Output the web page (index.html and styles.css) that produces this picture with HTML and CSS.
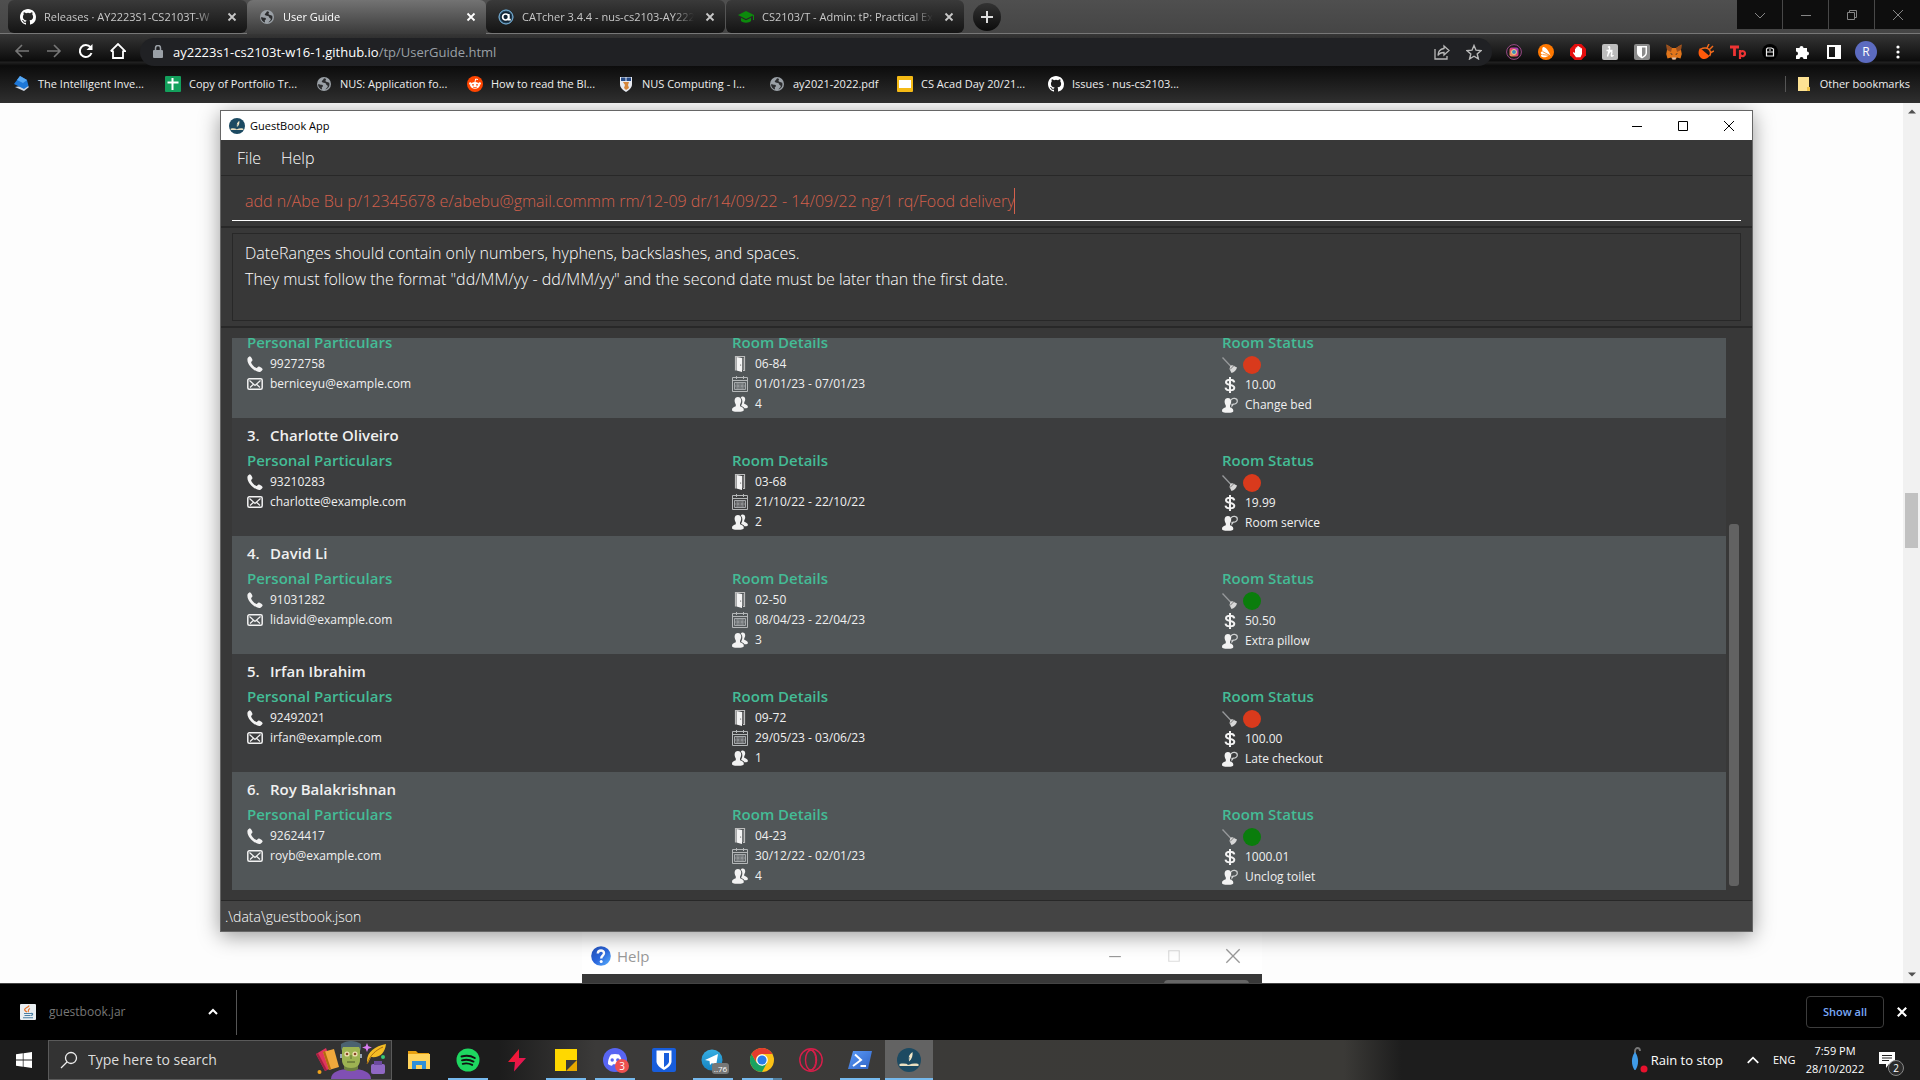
FILE: index.html
```html
<!DOCTYPE html>
<html lang="en">
<head>
<meta charset="utf-8">
<title>User Guide</title>
<link rel="stylesheet" href="styles.css">
</head>
<body>
<svg class="sprite" aria-hidden="true">
  <defs>
    <linearGradient id="insta" x1="0" y1="1" x2="1" y2="0"><stop offset="0" stop-color="#f5b04a"/><stop offset=".5" stop-color="#e0407a"/><stop offset="1" stop-color="#8a3ac8"/></linearGradient>
    <linearGradient id="bolt-fill" x1="0" y1="0" x2="1" y2="1"><stop offset="0" stop-color="#ff1a1a"/><stop offset="1" stop-color="#d8146c"/></linearGradient>
    <linearGradient id="ps-fill" x1="0" y1="0" x2="1" y2="1"><stop offset="0" stop-color="#5b9bf8"/><stop offset="1" stop-color="#2f62c4"/></linearGradient>
    <linearGradient id="tg-fill" x1="0" y1="0" x2="0" y2="1"><stop offset="0" stop-color="#37aee2"/><stop offset="1" stop-color="#1583c2"/></linearGradient>
    <linearGradient id="help-fill" x1="0" y1="0" x2="1" y2="1"><stop offset="0" stop-color="#2350b8"/><stop offset=".5" stop-color="#2a66dc"/><stop offset="1" stop-color="#5cb4ff"/></linearGradient>
  </defs>
  <symbol id="github" viewBox="0 0 16 16"><path fill="#fff" d="M8 0C3.58 0 0 3.58 0 8c0 3.54 2.29 6.53 5.47 7.59.4.07.55-.17.55-.38 0-.19-.01-.82-.01-1.49-2.01.37-2.53-.49-2.69-.94-.09-.23-.48-.94-.82-1.13-.28-.15-.68-.52-.01-.53.63-.01 1.08.58 1.23.82.72 1.21 1.87.87 2.33.66.07-.52.28-.87.51-1.07-1.78-.2-3.64-.89-3.64-3.95 0-.87.31-1.59.82-2.15-.08-.2-.36-1.02.08-2.12 0 0 .67-.21 2.2.82a7.6 7.6 0 0 1 4 0c1.53-1.04 2.2-.82 2.2-.82.44 1.1.16 1.92.08 2.12.51.56.82 1.27.82 2.15 0 3.07-1.87 3.75-3.65 3.95.29.25.54.73.54 1.48 0 1.07-.01 1.93-.01 2.2 0 .21.15.46.55.38A8.01 8.01 0 0 0 16 8c0-4.42-3.58-8-8-8z"/></symbol>
  <symbol id="globe" viewBox="0 0 16 16"><circle cx="8" cy="8" r="7" fill="#9aa0a6"/><path fill="#2b2c2e" d="M9 2.2c-2 .2-1.200 1.200-2.400 2s-1.200 1.800.2 2.200 3 .2 3.200 1.600 1.800 1 1.800 2.200-1.400 1.800-2.400 3.200c3.600-.8 4.600-4.200 3.800-6.600-1-.2-1.800-1-2.800-1s-1.200-1.600-.2-2.200zM2 8.200c1.600 0 2.400.4 3.800.6s1.600 1.800.4 2.200.2 1.600-.2 2.600C3.600 12.600 2 10.800 2 8.200z"/></symbol>
  <symbol id="catcher" viewBox="0 0 16 16"><circle cx="8" cy="8" r="7.500" fill="#2d4f66"/><circle cx="8" cy="8" r="7" fill="none" stroke="#7fb6dd" stroke-width="1"/><circle cx="8" cy="8" r="5.600" fill="#123"/><circle cx="7.600" cy="8" r="3" fill="none" stroke="#fff" stroke-width="1.700"/><path d="M10.800 5v5.600h2" stroke="#fff" stroke-width="1.600" fill="none"/></symbol>
  <symbol id="cap" viewBox="0 0 16 16"><path fill="#0c8a0c" d="M8 2 0 6l8 4 7-3.500V11h1V6zM3 8.800V12c2 2.200 8 2.200 10 0V8.800l-5 2.500z"/></symbol>
  <symbol id="close" viewBox="0 0 10 10"><path d="M1.500 1.500l7 7m0-7l-7 7" stroke="currentColor" stroke-width="1.800" fill="none"/></symbol>
  <symbol id="thin-close" viewBox="0 0 12 12"><path d="M1 1l10 10m0-10L1 11" stroke="currentColor" fill="none"/></symbol>
  <symbol id="minimise" viewBox="0 0 12 12"><path d="M1 6.500h10" stroke="currentColor" fill="none"/></symbol>
  <symbol id="maximise" viewBox="0 0 12 12"><path d="M1.500 1.500h9v9h-9z" stroke="currentColor" fill="none"/></symbol>
  <symbol id="restore" viewBox="0 0 12 12"><path d="M1.500 3.500h7v7h-7zM3.500 3.500v-2h7v7h-2" stroke="currentColor" fill="none"/></symbol>
  <symbol id="chevron-down" viewBox="0 0 12 12"><path d="M1 4l5 5 5-5" stroke="currentColor" fill="none"/></symbol>
  <symbol id="chevron-up" viewBox="0 0 12 12"><path d="M1.500 8.500L6 4l4.500 4.500" stroke="currentColor" stroke-width="1.500" fill="none"/></symbol>
  <symbol id="phone" viewBox="0 0 16 16"><path fill="#f2f2f2" d="M.5 2.600C1.200 1.200 2.400.2 3.200.4c.8.200 2.400 3 2.300 3.900-.1.900-1.600 1.500-1.400 2.300.5 2 3.200 4.800 5.200 5.300.9.200 1.500-1.300 2.400-1.400.9 0 3.700 1.700 3.900 2.500.2.900-1.300 2.600-2.600 2.900C8 16.600-.6 8.500.500 2.600z"/></symbol>
  <symbol id="mail" viewBox="0 0 16 16"><rect x=".8" y="2.800" width="14.400" height="10.400" rx="1.500" fill="none" stroke="#f2f2f2" stroke-width="1.500"/><path d="M2.500 4.500L8 9.500l5.500-5M3 11.500l3.500-3.300M13 11.500L9.500 8.200" fill="none" stroke="#f2f2f2" stroke-width="1.200"/></symbol>
  <symbol id="door" viewBox="0 0 16 16"><path d="M3.500 14.500v-14h9v14h-1.500" fill="none" stroke="#bcbcbc" stroke-width="1.200"/><path fill="#f4f4f4" d="M4.500 1L10 2v14l-5.500-1.500z"/><path d="M11 2v12" stroke="#999"/><circle cx="8.600" cy="9" r=".6" fill="#555"/></symbol>
  <symbol id="calendar" viewBox="0 0 16 16"><path d="M.5 1.500h15v14H.5zM.5 4.500h15M4.500 0v3M11.500 0v3" fill="none" stroke="#b4b7b8"/><path d="M2.500 6.500h11v7h-11zM2.500 10h11M6 6.500v7M10 6.500v7" fill="none" stroke="#a5a8aa"/><path d="M3.500 8h2M7 8h2M10.500 8h2M3.500 12h2M7 12h2M10.500 12h2" stroke="#999c9e"/></symbol>
  <symbol id="users" viewBox="0 0 16 16"><path fill="#f2f2f2" d="M8.800 1.600C9.600-.2 13 0 13.200 3c.1 1.500-.6 2.600-1 3.400v1.300c1.600.7 3.700 1.300 3.700 3 0 1-.7 1.500-3.500 1.600-.7-1.600-2.300-2-3.300-2.600.9-1.500 1.700-4 .9-6.100-.3-.8-.8-1.500-1.200-2z"/><path fill="#f2f2f2" d="M2.600 4.600C2.600 1.900 4.200 1 5.900 1s3.300 1 3.300 3.600c0 1.800-.7 3-1.200 3.900v1.700c1.700.7 3.800 1.300 3.800 3.500 0 1.500-1.300 2-5.900 2S0 15.200 0 13.700c0-2.200 2.100-2.800 3.800-3.500V8.500c-.5-.9-1.200-2.100-1.200-3.900z"/></symbol>
  <symbol id="broom" viewBox="0 0 16 16"><path d="M.5.5L9 9.500" stroke="#97999b" stroke-width="1.300"/><path fill="#d8d8d8" d="M8.500 8.500l2-.2 4.500 2.200c-.5 2.500-3 5-5.500 5.500L7.500 12z"/><path d="M8 12.500l4-4" stroke="#777"/></symbol>
  <symbol id="dollar" viewBox="0 0 16 16"><path d="M12.300 5.300C12 3.400 10.500 2.800 8 2.800S4 3.600 4 5.300 5.600 7.500 8 7.900s4.300 1 4.300 2.800S10.500 13.300 8 13.300 3.800 12.600 3.500 10.600M8 0v16" fill="none" stroke="#f2f2f2" stroke-width="2"/></symbol>
  <symbol id="request" viewBox="0 0 16 16"><path fill="#f2f2f2" d="M2.600 4.600C2.600 1.900 4.200 1 5.900 1s3.300 1 3.300 3.600c0 1.800-.7 3-1.200 3.900v1.700c1.700.7 3.300 1.300 3.300 3.500 0 1.500-1 2-5.400 2S0 15.200 0 13.700c0-2.200 2.100-2.800 3.800-3.500V8.500c-.5-.9-1.200-2.100-1.200-3.900z"/><path d="M9 3.200C10.400.4 15.400 1 15.300 4.200c0 2-2.400 3.200-4 2.900L10 8.900V6.700" fill="none" stroke="#cfd1d2" stroke-width="1.200"/></symbol>
  <symbol id="guestbook" viewBox="0 0 24 24"><circle cx="12" cy="12" r="12" fill="#1c4a62"/><path fill="#f3e8c8" d="M15.500 4c-3 2-4.500 5-4 9l.8.300c2.700-2.300 3.700-5.800 3.200-9.300z"/><path d="M2.500 18h19v-2c-3.500-.8-6.500-.6-9.500.8-3-1.400-6-1.600-9.500-.8z" fill="#eadfc0"/><path d="M12 9l-1 8" stroke="#1c4a62"/></symbol>
</svg>

<header class="browser">
  <div class="tabstrip">
    <nav class="tabs" aria-label="Tabs">
      <div class="tab"><svg class="i16"><use href="#github"/></svg><span class="tab-title">Releases · AY2223S1-CS2103T-W</span><button class="tab-x" aria-label="Close tab"><svg class="i10"><use href="#close"/></svg></button></div>
      <div class="tab active"><svg class="i16"><use href="#globe"/></svg><span class="tab-title">User Guide</span><button class="tab-x" aria-label="Close tab"><svg class="i10"><use href="#close"/></svg></button></div>
      <div class="tab"><svg class="i16"><use href="#catcher"/></svg><span class="tab-title">CATcher 3.4.4 - nus-cs2103-AY222</span><button class="tab-x" aria-label="Close tab"><svg class="i10"><use href="#close"/></svg></button></div>
      <div class="tab divided"><svg class="i16"><use href="#cap"/></svg><span class="tab-title">CS2103/T - Admin: tP: Practical Ex</span><button class="tab-x" aria-label="Close tab"><svg class="i10"><use href="#close"/></svg></button></div>
    </nav>
    <button class="new-tab" aria-label="New tab"><svg width="12" height="12"><path d="M6 0v12M0 6h12" stroke="#ddd" stroke-width="2"/></svg></button>
    <div class="frame-buttons">
      <button aria-label="Search tabs"><svg class="i12"><use href="#chevron-down"/></svg></button>
      <button aria-label="Minimise"><svg class="i12"><use href="#minimise"/></svg></button>
      <button aria-label="Restore"><svg class="i12"><use href="#restore"/></svg></button>
      <button aria-label="Close"><svg class="i12"><use href="#thin-close"/></svg></button>
    </div>
  </div>

  <div class="toolbar">
    <div class="nav-buttons">
      <button class="dim" aria-label="Back"><svg class="i16" viewBox="0 0 16 16"><path d="M15 8H2M8 2L2 8l6 6" fill="none" stroke="currentColor" stroke-width="1.600"/></svg></button>
      <button class="dim" aria-label="Forward"><svg class="i16" viewBox="0 0 16 16"><path d="M1 8h13M8 2l6 6-6 6" fill="none" stroke="currentColor" stroke-width="1.600"/></svg></button>
      <button aria-label="Reload"><svg class="i16" viewBox="0 0 16 16"><path d="M13.500 10A6 6 0 1 1 12.500 4.200" fill="none" stroke="currentColor" stroke-width="2"/><path d="M14.500 1v6h-6z" fill="currentColor"/></svg></button>
      <button aria-label="Home"><svg class="i16" viewBox="0 0 16 16"><path d="M3 7.500V15h10V7.500M.8 8.200L8 1l7.200 7.200H13M.8 8.200H3" fill="none" stroke="currentColor" stroke-width="1.800"/></svg></button>
    </div>
    <div class="omnibox">
      <svg width="10" height="14" viewBox="0 0 10 14"><path d="M1 5h8a1 1 0 0 1 1 1v6a1 1 0 0 1-1 1H1a1 1 0 0 1-1-1V6a1 1 0 0 1 1-1z" fill="#9aa0a6"/><path d="M2.500 5.500V3a2.500 2.500 0 0 1 5 0v2.500" fill="none" stroke="#9aa0a6" stroke-width="1.500"/></svg>
      <a class="url" href="#">ay2223s1-cs2103t-w16-1.github.io<span>/tp/UserGuide.html</span></a>
      <div class="omni-actions">
        <button aria-label="Share"><svg class="i16" viewBox="0 0 16 16"><path d="M1 5v10h12v-3" fill="none" stroke="currentColor" stroke-width="1.300"/><path d="M10 2l5 4.500-5 4.500V8.500C7 8.500 5 9.500 4 11.500c0-4 2.500-6.500 6-7z" fill="none" stroke="currentColor" stroke-width="1.300"/></svg></button>
        <button aria-label="Bookmark this page"><svg class="i16" viewBox="0 0 16 16"><path d="M8 1.500l2 4.700 5 .4-3.800 3.300 1.200 5L8 12.200l-4.400 2.700 1.200-5L1 6.600l5-.4z" fill="none" stroke="currentColor" stroke-width="1.400"/></svg></button>
      </div>
    </div>
    <div class="extensions">
      <button aria-label="Instagram"><svg class="i16" viewBox="0 0 16 16"><circle cx="8" cy="8" r="7.400" fill="#1a1a1a" stroke="#9a4a86"/><rect x="3.500" y="3.500" width="9" height="9" rx="2" fill="url(#insta)"/><circle cx="8" cy="8" r="2.500" fill="#3d8ac0" stroke="#f5d27a"/></svg></button>
      <button aria-label="Antivirus"><svg class="i16" viewBox="0 0 16 16"><circle cx="8" cy="8" r="8" fill="#ff7800"/><path d="M5.200 3c2.300-.5 5.300 3.500 7.300 8.500-2 .3-3 .8-4 1.300-1.500.8-4.500.7-5.300-.5-.6-1 .3-1.600 1.300-1.700-1.300-.4-2-1.400-1.600-2.300.3-.8 1.200-.8 2-.6C4 6.500 3.800 3.500 5.200 3z" fill="#fff"/><path d="M4.900 7.700L12 11.500l-7.500-.9" fill="none" stroke="#ff7800" stroke-width=".8"/></svg></button>
      <button aria-label="Ad blocker"><svg class="i16" viewBox="0 0 16 16"><path d="M4.700 0h6.600L16 4.700v6.600L11.300 16H4.700L0 11.300V4.700z" fill="#e40d0d"/><path d="M5 5v4L3.500 8 3 9l3 4.200h4.500L12 10V4.500l-1-.5-.5.500V3.300l-1-.5-.5.500v-.8L8 2l-.8.5v1L6 3.300l-.4.700v1z" fill="#fff"/></svg></button>
      <button aria-label="Coupons"><svg class="i16" viewBox="0 0 16 16"><rect width="16" height="16" rx="2" fill="#bcbcbc"/><path d="M6 3.500C8 1.500 8 4 7 7l-1.500 5.500C6 9 8 7 9.300 7.200s0 3 0 4.300 1.700.500 2-.5M4.500 6.500h6" fill="none" stroke="#fff" stroke-width="1.400"/></svg></button>
      <button aria-label="Password manager"><svg class="i16" viewBox="0 0 16 16"><rect width="16" height="16" rx="2" fill="#8a8a8a"/><path d="M3 2h10v7c0 2-2 4-5 5.500C5 13 3 11 3 9z" fill="#fff"/><path d="M8 3.500h3.500V9c0 1.300-1.500 2.600-3.500 3.800z" fill="#8a8a8a"/></svg></button>
      <button aria-label="Wallet"><svg class="i16" viewBox="0 0 16 16"><path d="M.5.5L6 4h4L15.500.5 15 6l.8 4-1.300 4.500-3.500-1-1.500 2h-3l-1.500-2-3.500 1L.2 10 1 6z" fill="#e2761b"/><path d="M.5.5L6 4 5 8 1 6zM15.500.5L10 4l1 4 4-2z" fill="#9a4f1e"/><path d="M4 9l2.500 1-.5 1zM12 9l-2.500 1 .5 1z" fill="#1c2733"/><path d="M6 13.500h4l-.5 2h-3z" fill="#d7c1b3"/></svg></button>
      <button aria-label="Plug"><svg class="i16" viewBox="0 0 16 16"><path d="M2 4l9.500 8C9 15.500 5 16 2.500 13.500S0 7 2 4z" fill="#ff5a0a"/><path d="M3 5c3-2 7-1 8.500 1s1 4.500 0 6M9 4l2-4M11 6l4-4M12 9l4-2" fill="none" stroke="#f26a1b" stroke-width="1.500"/></svg></button>
      <button aria-label="Toolpad"><svg class="i16" viewBox="0 0 16 16"><path d="M0 3h9M4.500 3v9" stroke="#ee3434" stroke-width="2.800"/><path d="M10 15V6M10 9.500a2.500 2.500 0 1 1 0 .1z" stroke="#ee3434" stroke-width="2.200" fill="none"/></svg></button>
      <button aria-label="Clipboard"><svg class="i16" viewBox="0 0 16 16"><circle cx="8" cy="8" r="8" fill="#000"/><path d="M4.500 5v7h7V5L9.500 4h-4zM4.500 8h7M7 6h2" fill="none" stroke="#eee" stroke-width="1.200"/></svg></button>
      <button aria-label="Extensions"><svg class="i16" viewBox="0 0 16 16"><path d="M2 4h3.500a2 2 0 1 1 4 0H13v3.500a2 2 0 1 1 0 4V15H9.500a2 2 0 0 0-4 0H2v-3.500a2 2 0 0 0 0-4z" fill="#fff"/></svg></button>
      <button aria-label="Side panel"><svg class="i16" viewBox="0 0 16 16"><path d="M1 1h14v14H1zM3 3v10h6V3z" fill="#fff" fill-rule="evenodd"/></svg></button>
      <button class="profile" aria-label="Profile">R</button>
      <button aria-label="Menu"><svg class="i16" viewBox="0 0 16 16"><circle cx="8" cy="3" r="1.600" fill="#fff"/><circle cx="8" cy="8" r="1.600" fill="#fff"/><circle cx="8" cy="13" r="1.600" fill="#fff"/></svg></button>
    </div>
  </div>

  <nav class="bookmarks" aria-label="Bookmarks">
    <a href="#"><svg class="i16" viewBox="0 0 16 16"><path d="M1 11l9 4 5-4-2-2z" fill="#cfd8e4"/><path d="M6 0l7 4 1.500 6L10 13 0 8z" fill="#1e78d8"/><path d="M6 0l7 4-4 3-6-3z" fill="#57a8f4"/></svg>The Intelligent Inve...</a>
    <a href="#"><svg class="i16" viewBox="0 0 16 16"><rect width="16" height="16" rx="1" fill="#13a05c"/><path d="M7.500 2v12M2.500 6.500h11" stroke="#fff" stroke-width="2"/></svg>Copy of Portfolio Tr...</a>
    <a href="#"><svg class="i16"><use href="#globe"/></svg>NUS: Application fo...</a>
    <a href="#"><svg class="i16" viewBox="0 0 16 16"><circle cx="8" cy="8" r="8" fill="#ff4500"/><ellipse cx="8" cy="9.300" rx="4.800" ry="3.400" fill="#fff"/><circle cx="3.300" cy="7.500" r="1.200" fill="#fff"/><circle cx="12.700" cy="7.500" r="1.200" fill="#fff"/><circle cx="6" cy="8.800" r=".9" fill="#ff4500"/><circle cx="10" cy="8.800" r=".9" fill="#ff4500"/><path d="M8 6l.6-3 2.400.5" stroke="#fff" fill="none"/><path d="M6 11c1.200.8 2.800.8 4 0" stroke="#ff4500" stroke-width=".8" fill="none"/></svg>How to read the Bl...</a>
    <a href="#"><svg class="i16" viewBox="0 0 16 16"><path d="M2 1h12v7c0 4-3 6-6 8-3-2-6-4-6-8z" fill="#e8eaf0"/><path d="M3 1.500h4.500v3.500H3zM8.500 1.500H13v3.500H8.500z" fill="#274b86"/><path d="M5 6h6l-1 3 1 3-3 2-2-2 1-3z" fill="#d6863a"/></svg>NUS Computing - I...</a>
    <a class="compact" href="#"><svg class="i16"><use href="#globe"/></svg>ay2021-2022.pdf</a>
    <a href="#"><svg class="i16" viewBox="0 0 16 16"><rect width="16" height="16" rx="1" fill="#f5ba15"/><rect x="2" y="4" width="12" height="8" fill="#fff"/></svg>CS Acad Day 20/21...</a>
    <a href="#"><svg class="i16"><use href="#github"/></svg>Issues · nus-cs2103...</a>
    <a class="other" href="#"><svg class="i16" viewBox="0 0 16 16"><path d="M2 1h11v10l1 1v3H2z" fill="#fde293"/><path d="M11 11h3v4h-3z" fill="#f0c34a"/></svg>Other bookmarks</a>
  </nav>
</header>

<main class="page">
  <section class="window help-window" aria-label="Help">
    <div class="help-title">
      <svg class="i20" viewBox="0 0 20 20"><circle cx="10" cy="10" r="9.800" fill="url(#help-fill)"/><path d="M6.800 7.500C7 3.500 13.200 3.600 13 7.300c-.1 2.200-2.800 2.500-2.800 5.200" fill="none" stroke="#fff" stroke-width="2.400"/><circle cx="10.200" cy="15.600" r="1.500" fill="#fff"/></svg>
      <h2>Help</h2>
      <div class="help-buttons">
        <button aria-label="Minimise"><svg class="i14"><use href="#minimise"/></svg></button>
        <button class="faint" aria-label="Maximise"><svg class="i14"><use href="#maximise"/></svg></button>
        <button aria-label="Close"><svg class="i16"><use href="#thin-close"/></svg></button>
      </div>
    </div>
    <div class="help-body"><button class="copy" aria-label="Copy URL"></button></div>
  </section>

  <section class="window app" aria-label="GuestBook App">
    <div class="app-title">
      <svg class="i16"><use href="#guestbook"/></svg>
      <h1>GuestBook App</h1>
      <div class="app-buttons">
        <button aria-label="Minimise"><svg class="i12"><use href="#minimise"/></svg></button>
        <button aria-label="Maximise"><svg class="i12"><use href="#maximise"/></svg></button>
        <button aria-label="Close"><svg class="i12"><use href="#thin-close"/></svg></button>
      </div>
    </div>
    <div class="menu"><button>File</button><button>Help</button></div>
    <div class="command-pane">
      <div class="command"><input type="text" aria-label="Command" value="add n/Abe Bu p/12345678 e/abebu@gmail.commm rm/12-09 dr/14/09/22 - 14/09/22 ng/1 rq/Food delivery"><span class="caret"></span></div>
    </div>
    <div class="result-pane">
      <div class="result">DateRanges should contain only numbers, hyphens, backslashes, and spaces.<br>They must follow the format "dd/MM/yy - dd/MM/yy" and the second date must be later than the first date.</div>
    </div>
    <div class="list-pane">
      <ol class="guests">
        <li class="guest">
          <h3></h3>
          <div class="details">
            <div><h4>Personal Particulars</h4><p><svg class="i16"><use href="#phone"/></svg>99272758</p><p><svg class="i16"><use href="#mail"/></svg>berniceyu@example.com</p></div>
            <div><h4>Room Details</h4><p><svg class="i16"><use href="#door"/></svg>06-84</p><p><svg class="i16"><use href="#calendar"/></svg>01/01/23 - 07/01/23</p><p><svg class="i16"><use href="#users"/></svg>4</p></div>
            <div><h4>Room Status</h4><p class="clean"><svg class="i16"><use href="#broom"/></svg><span class="dot"></span></p><p><svg class="i16"><use href="#dollar"/></svg>10.00</p><p><svg class="i16"><use href="#request"/></svg>Change bed</p></div>
          </div>
        </li>
        <li class="guest">
          <h3><span>3.</span>Charlotte Oliveiro</h3>
          <div class="details">
            <div><h4>Personal Particulars</h4><p><svg class="i16"><use href="#phone"/></svg>93210283</p><p><svg class="i16"><use href="#mail"/></svg>charlotte@example.com</p></div>
            <div><h4>Room Details</h4><p><svg class="i16"><use href="#door"/></svg>03-68</p><p><svg class="i16"><use href="#calendar"/></svg>21/10/22 - 22/10/22</p><p><svg class="i16"><use href="#users"/></svg>2</p></div>
            <div><h4>Room Status</h4><p class="clean"><svg class="i16"><use href="#broom"/></svg><span class="dot"></span></p><p><svg class="i16"><use href="#dollar"/></svg>19.99</p><p><svg class="i16"><use href="#request"/></svg>Room service</p></div>
          </div>
        </li>
        <li class="guest">
          <h3><span>4.</span>David Li</h3>
          <div class="details">
            <div><h4>Personal Particulars</h4><p><svg class="i16"><use href="#phone"/></svg>91031282</p><p><svg class="i16"><use href="#mail"/></svg>lidavid@example.com</p></div>
            <div><h4>Room Details</h4><p><svg class="i16"><use href="#door"/></svg>02-50</p><p><svg class="i16"><use href="#calendar"/></svg>08/04/23 - 22/04/23</p><p><svg class="i16"><use href="#users"/></svg>3</p></div>
            <div><h4>Room Status</h4><p class="clean"><svg class="i16"><use href="#broom"/></svg><span class="dot yes"></span></p><p><svg class="i16"><use href="#dollar"/></svg>50.50</p><p><svg class="i16"><use href="#request"/></svg>Extra pillow</p></div>
          </div>
        </li>
        <li class="guest">
          <h3><span>5.</span>Irfan Ibrahim</h3>
          <div class="details">
            <div><h4>Personal Particulars</h4><p><svg class="i16"><use href="#phone"/></svg>92492021</p><p><svg class="i16"><use href="#mail"/></svg>irfan@example.com</p></div>
            <div><h4>Room Details</h4><p><svg class="i16"><use href="#door"/></svg>09-72</p><p><svg class="i16"><use href="#calendar"/></svg>29/05/23 - 03/06/23</p><p><svg class="i16"><use href="#users"/></svg>1</p></div>
            <div><h4>Room Status</h4><p class="clean"><svg class="i16"><use href="#broom"/></svg><span class="dot"></span></p><p><svg class="i16"><use href="#dollar"/></svg>100.00</p><p><svg class="i16"><use href="#request"/></svg>Late checkout</p></div>
          </div>
        </li>
        <li class="guest">
          <h3><span>6.</span>Roy Balakrishnan</h3>
          <div class="details">
            <div><h4>Personal Particulars</h4><p><svg class="i16"><use href="#phone"/></svg>92624417</p><p><svg class="i16"><use href="#mail"/></svg>royb@example.com</p></div>
            <div><h4>Room Details</h4><p><svg class="i16"><use href="#door"/></svg>04-23</p><p><svg class="i16"><use href="#calendar"/></svg>30/12/22 - 02/01/23</p><p><svg class="i16"><use href="#users"/></svg>4</p></div>
            <div><h4>Room Status</h4><p class="clean"><svg class="i16"><use href="#broom"/></svg><span class="dot yes"></span></p><p><svg class="i16"><use href="#dollar"/></svg>1000.01</p><p><svg class="i16"><use href="#request"/></svg>Unclog toilet</p></div>
          </div>
        </li>
      </ol>
      <div class="list-scroll"><span></span></div>
    </div>
    <footer class="status">.\data\guestbook.json</footer>
  </section>

  <div class="page-scroll" aria-hidden="true">
    <svg width="17" height="17"><path d="M5 10.500h8L9 6.500z" fill="#505050"/></svg>
    <span class="page-thumb"></span>
    <svg width="17" height="17"><path d="M5 6.500h8L9 10.500z" fill="#505050"/></svg>
  </div>
</main>

<section class="downloads" aria-label="Downloads">
  <div class="download">
    <svg class="i16" viewBox="0 0 16 16"><rect width="16" height="16" rx="1" fill="#e9eef2"/><path d="M8.500 1.500C11 3-0 4.500 7 8M10 4.500C7 6 9.500 6.500 8 8" stroke="#e8762c" stroke-width="1.200" fill="none"/><path d="M4 9.500h7M4.500 11.500h6M3 13.800h10M11 9.500c2.500-.5 2 1.500 0 2" stroke="#4a7fa5" stroke-width="1.100" fill="none"/></svg>
    <a href="#">guestbook.jar</a>
    <button aria-label="Download options"><svg class="i12" viewBox="0 0 12 12"><path d="M2 8l4-4 4 4" stroke="#fff" stroke-width="2" fill="none"/></svg></button>
  </div>
  <button class="show-all">Show all</button>
  <button class="dl-close" aria-label="Close downloads"><svg class="i12"><use href="#close"/></svg></button>
</section>

<footer class="taskbar">
  <button class="start" aria-label="Start"><svg class="i16" viewBox="0 0 16 16"><path fill="#fff" d="M0 2.200L6.800 1.300v6.300H0zM7.500 1.200L16 0v7.600H7.500zM0 8.400h6.800v6.300L0 13.800zM7.500 8.400H16V16l-8.500-1.200z"/></svg></button>
  <label class="search">
    <svg width="18" height="18" viewBox="0 0 18 18"><circle cx="11" cy="7" r="5.500" fill="none" stroke="#eee" stroke-width="1.300"/><path d="M7 11l-6 6" stroke="#eee" stroke-width="1.300"/></svg>
    <input type="text" placeholder="Type here to search" aria-label="Search">
    <svg class="doodle" width="72" height="38" viewBox="0 0 72 38">
      <path d="M0 13l10-6 7 19-8 4z" fill="#e0365c"/><path d="M0 13l2-1 9 17-2 1z" fill="#a81f42"/><path d="M7 11l11-3 5 18-10 3z" fill="#f0a83c"/><path d="M7 11l2-1 6 18-2 1z" fill="#b46a10"/>
      <path d="M15 38c0-7 8-10 20-10s20 3 20 10z" fill="#8050b4"/><path d="M28 24h14v4c-3 3-11 3-14 0z" fill="#6d8040"/>
      <path d="M26 5h18v14c0 5-3 8-9 8s-9-3-9-8z" fill="#9db352"/><path d="M25 10V3c6-4 14-4 20 0v7l-2-4H27z" fill="#4b6270"/><path d="M24 13h2v4h-2zM44 13h2v4h-2z" fill="#9aa6b4"/>
      <circle cx="31" cy="13" r="2.600" fill="#f0e2b4"/><circle cx="39" cy="13" r="2.600" fill="#f0e2b4"/><circle cx="31" cy="13" r="1.300" fill="#8a4a26"/><circle cx="39" cy="13" r="1.300" fill="#8a4a26"/><path d="M31 21h8" stroke="#5d6c30" stroke-width="1.300"/><path d="M34 14h2v4h-2z" fill="#7c9240"/>
      <path d="M51 20c0-9 8-15 19-17-1 9-6 14-15 13l-3 6z" fill="#f4bc24"/><path d="M51 23C54 14 60 9 67 6" stroke="#a86c10" fill="none"/>
      <path d="M51 2l1.300 3.200L56 6.500l-3.700 1.300L51 11l-1.300-3.200L46 6.500l3.700-1.300z" fill="#d87cf2"/><circle cx="67" cy="16" r="2" fill="#38c878"/><circle cx="3.500" cy="31" r="2" fill="#f2a41c"/>
      <rect x="55" y="23" width="14" height="10" rx="2" fill="#8f68c4"/><rect x="58" y="20" width="8" height="4" fill="#6c4aa0"/>
    </svg>
  </label>
  <nav class="apps" aria-label="Running apps">
    <button aria-label="File Explorer"><svg class="i24" viewBox="0 0 24 24"><path d="M1 3h8l2 2h11v3H1z" fill="#e8a010"/><path d="M1 6h22v15H1z" fill="#ffd35c"/><path d="M5 13h14v8h-4v-4H9v4H5z" fill="#2f8fd8"/></svg></button>
    <button class="open" aria-label="Spotify"><svg class="i24" viewBox="0 0 24 24"><circle cx="12" cy="12" r="11.500" fill="#1ed760"/><path d="M5.500 8.500c4.500-1.300 9.500-.8 13.300 1.500M6 12.300c4-1 8-.6 11.500 1.300M6.700 15.800c3.300-.8 6.500-.5 9.500 1.100" fill="none" stroke="#111" stroke-width="1.900" stroke-linecap="round"/></svg></button>
    <button aria-label="Lightning"><svg class="i24" viewBox="0 0 24 24"><path d="M14 1L3 14h7L9 23.500 21 10h-7z" fill="url(#bolt-fill)"/></svg></button>
    <button class="open" aria-label="Sticky Notes"><svg class="i24" viewBox="0 0 24 24"><path d="M1 1h22v11L12 23H1z" fill="#ffd800"/><path d="M12 12h11v11H12z" fill="#e6a800"/><path d="M12 12h11L12 23z" fill="#3a3a3a"/></svg></button>
    <button class="open" aria-label="Discord"><svg class="i24" viewBox="0 0 24 24"><circle cx="12" cy="12" r="12" fill="#5865f2"/><path d="M8 6.500c2.500-.8 5.500-.8 8 0 2 2.500 3.200 6 3 9.500-1.200 1-2.600 1.500-4 1.700l-1-1.500h-4l-1 1.500c-1.400-.2-2.800-.7-4-1.700-.2-3.500 1-7 3-9.500z" fill="#fff"/><circle cx="9.200" cy="12" r="1.700" fill="#5865f2"/><circle cx="14.800" cy="12" r="1.700" fill="#5865f2"/></svg><span class="badge red">3</span></button>
    <button aria-label="Bitwarden"><svg class="i24" viewBox="0 0 24 24"><rect width="24" height="24" rx="2" fill="#175ddc"/><path d="M4.500 2.500h15v11c0 3-3 6-7.500 8.500-4.500-2.500-7.500-5.500-7.500-8.500z" fill="#fff"/><path d="M12 5h5v8.500c0 1.800-2 3.800-5 5.700z" fill="#175ddc"/></svg></button>
    <button class="open" aria-label="Telegram"><svg class="i24" viewBox="0 0 24 24"><circle cx="11" cy="12" r="10.500" fill="url(#tg-fill)"/><path d="M4 12l13-6-2 12-4-3-2 2-.5-4z" fill="#fff"/></svg><span class="badge grey">..76</span></button>
    <button class="open stacked" aria-label="Chrome"><svg class="i24" viewBox="0 0 24 24"><circle cx="12" cy="12" r="12" fill="#fbc116"/><path d="M1.600 6A12 12 0 0 0 12 24l5-9.200L12 12 6.800 15z" fill="#1aa260"/><path d="M1.600 6A12 12 0 0 1 22.400 6H12a6 6 0 0 0-5.200 9z" fill="#e33b2e"/><circle cx="12" cy="12" r="5.800" fill="#fff"/><circle cx="12" cy="12" r="4.600" fill="#2a7de8"/></svg></button>
    <button aria-label="Opera"><svg class="i24" viewBox="0 0 24 24"><circle cx="12" cy="12" r="11.200" fill="none" stroke="#d81e4a" stroke-width="1.400"/><ellipse cx="12" cy="12" rx="5.500" ry="10" fill="none" stroke="#d81e4a" stroke-width="1.400"/><path d="M10 1.500c9 1 9 20 0 21" fill="none" stroke="#d81e4a"/></svg></button>
    <button class="open" aria-label="PowerShell"><svg class="i24" viewBox="0 0 24 24"><path d="M5 3h19l-4 18H0z" fill="url(#ps-fill)"/><path d="M7 6.500l6 5.500-8 6M12.500 18H18" fill="none" stroke="#fff" stroke-width="2"/></svg></button>
    <button class="open current" aria-label="GuestBook App"><svg class="i24"><use href="#guestbook"/></svg></button>
  </nav>
  <div class="tray">
    <button class="weather"><svg width="20" height="26" viewBox="0 0 20 26"><path d="M6 6V4c0-4 5-4 5 0" fill="none" stroke="#777" stroke-width="1.800"/><path d="M6 5c4 5 4 13 .5 18h-1C2 18 2 10 6 5z" fill="#3f9be8"/><circle cx="15" cy="22" r="3.500" fill="#e8112d"/></svg>Rain to stop</button>
    <button class="tray-up" aria-label="Show hidden icons"><svg class="i14"><use href="#chevron-up"/></svg></button>
    <span class="lang">ENG</span>
    <time class="clock" datetime="2022-10-28T19:59">7:59 PM<br>28/10/2022</time>
    <button class="notes" aria-label="Notifications"><svg width="18" height="18" viewBox="0 0 18 18"><path d="M1 1h16v12h-6l-3 4v-4H1z" fill="#fff"/><path d="M4 4.500h10M4 7h10M4 9.500h7" stroke="#222"/></svg><span class="badge dark">2</span></button>
  </div>
</footer>
</body>
</html>
```
FILE: styles.css
```css
:root { --ui: "Open Sans", "Noto Sans", sans-serif; --line: #282828; --panel: #383838; }
* { box-sizing: border-box; }
body { margin: 0; min-height: 100vh; display: flex; flex-direction: column; font: 12px/16px var(--ui); background: #fdfdfd; color: #fff; overflow: hidden; }
button { border: 0; padding: 0; background: none; color: inherit; font: inherit; display: flex; align-items: center; justify-content: center; }
a { color: inherit; text-decoration: none; }
h1, h2, h3, h4, p, ol { margin: 0; padding: 0; font: inherit; list-style: none; }
svg { display: block; flex: none; }
.sprite { position: absolute; width: 0; height: 0; }
.i10 { width: 10px; height: 10px; }
.i12 { width: 12px; height: 12px; }
.i14 { width: 14px; height: 14px; }
.i16 { width: 16px; height: 16px; }
.i20 { width: 20px; height: 20px; }
.i24 { width: 24px; height: 24px; }

/* Browser frame */
.tabstrip { display: flex; height: 34px; background: linear-gradient(#4f4f4f, #454545); border-bottom: 1px solid #777; }
.tabs { display: flex; margin-left: 8px; }
.tab { display: flex; align-items: center; gap: 8px; width: 239px; height: 33px; padding: 0 7px 0 12px; border-radius: 6px; background: linear-gradient(#3a3a3a, #141414); color: #c8c8c8; font-size: 11px; }
.tab.active { height: 34px; background: linear-gradient(#737373, #3a3a3a); color: #fff; border-radius: 6px 6px 0 0; }
.tab.divided { border-left: 1px solid #555; }
.tab-title { flex: 1; min-width: 0; overflow: hidden; white-space: nowrap; mask-image: linear-gradient(90deg, #000 88%, transparent); }
.tab-x { width: 16px; height: 16px; }
.new-tab { width: 28px; height: 28px; margin: 3px 0 0 9px; border-radius: 14px; background: linear-gradient(#333, #0c0c0c); }
.frame-buttons { display: flex; gap: 1px; margin-left: auto; height: 29px; background: #484848; color: #858585; }
.frame-buttons button { width: 45px; background: #0e0e0e; }

.toolbar { display: flex; align-items: center; height: 32px; background: linear-gradient(#363636, #0c0c0c 27px, #222 28px, #0a0a0a); }
.nav-buttons { display: flex; gap: 16px; width: 140px; padding: 2px 0 0 14px; }
.dim { color: #777; }
.omnibox { flex: 1; display: flex; align-items: center; gap: 10px; height: 28px; padding: 0 10px 0 13px; border-radius: 14px; background: #202124; color: #b8b8b8; margin-top: 4px; }
.omni-actions { display: flex; gap: 16px; }
.url { flex: 1; color: #fff; font-size: 13px; }
.url span { color: #9aa0a6; }
.extensions { display: flex; gap: 8px; padding: 4px 10px 0; }
.extensions button { width: 24px; height: 24px; }
.extensions .profile { width: 22px; margin: 1px; height: 22px; border-radius: 50%; background: #5c6bc0; }

.bookmarks { display: flex; align-items: center; height: 37px; padding: 0 10px 2px 14px; background: linear-gradient(#0c0c0c, #2f2f2f); font-size: 11px; white-space: nowrap; }
.bookmarks a { display: flex; align-items: center; gap: 8px; width: 151px; color: #eee; }
.bookmarks .compact { width: 128px; }
.bookmarks .other { width: auto; margin-left: auto; padding-left: 10px; border-left: 1px solid #555; }

/* Page canvas with the floating windows */
.page { position: relative; flex: 1; display: flex; justify-content: flex-end; overflow: hidden; background: #fdfdfd; }
.page-scroll { display: flex; flex-direction: column; justify-content: space-between; align-items: center; width: 17px; background: #f1f1f1; }
.page-thumb { width: 13px; height: 55px; margin-bottom: 46px; background: #c1c1c1; }
.window { position: absolute; display: flex; flex-direction: column; }

.help-window { left: 582px; width: 680px; bottom: 0; height: 60px; background: #fff; color: #999; }
.help-title { flex: none; display: flex; align-items: center; gap: 6px; height: 51px; padding: 14px 0 0 9px; }
.help-title h2 { font-size: 15px; }
.help-buttons { display: flex; margin-left: auto; }
.help-buttons button { width: 59px; }
.help-buttons .faint { color: #ddd; }
.help-body { flex: 1; min-height: 0; overflow: hidden; display: flex; justify-content: flex-end; padding: 6px 13px 0 0; background: var(--panel); }
.copy { width: 85px; height: 30px; border-radius: 4px; background: #666; }

.app { left: 220px; right: 167px; top: 7px; bottom: 51px; border: 1px solid #666; background: var(--panel); box-shadow: 0 4px 20px rgba(0, 0, 0, .4); }
.app-title { display: flex; align-items: center; gap: 5px; height: 29px; padding-left: 8px; background: #fff; color: #000; }
.app-title h1 { font-size: 11px; }
.app-buttons { display: flex; margin-left: auto; height: 100%; }
.app-buttons button { width: 46px; }
.menu { display: flex; gap: 20px; height: 36px; padding: 0 16px; border-bottom: 1px solid var(--line); font-size: 16px; font-weight: 300; }
.command-pane { padding: 0 11px; height: 52px; border-bottom: 2px solid var(--line); }
.command { display: flex; align-items: center; height: 45px; padding: 6px 0 0 13px; border-bottom: 1px solid #fff; }
.command input { field-sizing: content; padding: 0; border: 0; outline: 0; background: none; color: #d4604c; font: 300 16px/26px var(--ui); }
.caret { width: 1px; height: 26px; background: #d4604c; }
.result-pane { padding: 5px 11px; height: 100px; border-bottom: 2px solid var(--line); }
.result { height: 88px; padding: 6px 12px; border: 1px solid var(--line); font-size: 16px; line-height: 26px; font-weight: 300; }
.list-pane { flex: 1; min-height: 0; display: flex; gap: 3px; padding: 10px 13px 10px 11px; border-bottom: 1px solid var(--line); }
.guests { flex: 1; display: flex; flex-direction: column; justify-content: flex-end; overflow: hidden; }
.guest { flex: none; height: 118px; padding: 7px 0 0 15px; background: #3c3d3e; color: #f0f0f0; }
.guest:nth-child(odd) { background: #515658; }
.guest h3 { display: flex; height: 24px; font-size: 15px; line-height: 20px; font-weight: 600; }
.guest h3 span { width: 23px; }
.details { display: grid; grid-template-columns: 485fr 490fr 504fr; }
.details h4 { height: 23px; font-size: 15px; line-height: 22px; font-weight: 600; color: #44bc96; }
.details p { display: flex; align-items: center; gap: 7px; height: 20px; font-size: 12px; line-height: 20px; }
.details .clean { gap: 5px; height: 21px; }
.dot { width: 18px; height: 18px; border-radius: 50%; background: #d93a1c; }
.dot.yes { background: #0a7d0c; }
.list-scroll { display: flex; flex-direction: column; justify-content: flex-end; width: 10px; padding-bottom: 4px; }
.list-scroll span { height: 66%; border-radius: 3px; background: #626262; }
.status { height: 30px; padding: 0 4px; background: #444; font-size: 14px; line-height: 32px; font-weight: 300; }

/* Download shelf */
.downloads { display: flex; align-items: center; height: 57px; padding: 0 12px 0 20px; border-top: 1px solid #444; background: #000; }
.download { display: flex; align-items: center; gap: 13px; width: 217px; height: 45px; padding-right: 17px; border-right: 1px solid #555; color: #777; }
.download button { margin-left: auto; }
.show-all { width: 78px; height: 32px; margin: 0 12px 0 auto; border: 1px solid #3c3c3c; border-radius: 4px; color: #7aa9f7; font-size: 11px; font-weight: 600; }

/* Taskbar */
.taskbar { display: flex; height: 40px; background: linear-gradient(90deg, #1c1c1c 26%, #3b3a39 31%, #3b3a37 70%, #1d1d1d 73%); }
.start { width: 48px; }
.search { display: flex; align-items: center; width: 344px; padding: 0 3px 0 11px; border: 1px solid #5a5a5a; background: #333; }
.search input { flex: 1; min-width: 0; border: 0; padding: 0 0 0 10px; background: none; color: #fff; font: 14px/20px var(--ui); }
.search input::placeholder { color: #ddd; }
.doodle { align-self: flex-end; }
.apps { display: flex; gap: 1px; margin-left: 3px; }
.apps button { position: relative; width: 48px; }
.apps .open::after { content: ""; position: absolute; left: 4px; right: 4px; bottom: 0; height: 2px; background: #76b9ed; }
.apps .stacked::after { background: linear-gradient(90deg, #76b9ed 78%, #52809f 78%); }
.apps .current { background: #636363; }
.apps .current::after { left: 0; right: 0; }
.badge { position: absolute; display: grid; place-items: center; font-size: 10px; line-height: 12px; color: #fff; }
.red { right: 10px; bottom: 7px; width: 14px; height: 14px; border-radius: 50%; background: #ed5050; }
.grey { right: 8px; bottom: 6px; width: 17px; height: 11px; border-radius: 3px; background: #777; font-size: 8px; }
.tray { display: flex; align-items: center; margin-left: auto; padding-right: 16px; }
.weather { gap: 2px; margin-right: 10px; font-size: 13px; }
.tray-up { width: 40px; }
.lang { width: 29px; font-size: 11px; }
.clock { width: 66px; font-size: 11px; line-height: 18px; text-align: center; }
.notes { position: relative; width: 34px; margin-left: 2px; height: 40px; }
.dark { right: 0; bottom: 4px; width: 16px; height: 16px; border-radius: 50%; border: 1px solid #888; background: #2b2b2b; }
```
